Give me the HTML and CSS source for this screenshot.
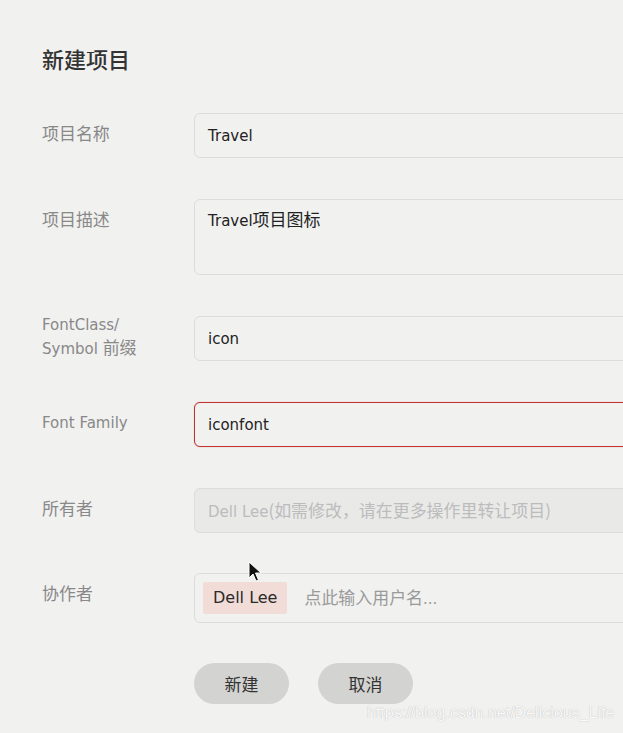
FILE: index.html
```html
<!DOCTYPE html>
<html lang="zh">
<head>
<meta charset="utf-8">
<title>新建项目</title>
<link rel="stylesheet" href="styles.css">
</head>
<body>
<div class="page">
  <h1 class="title">新建项目</h1>
  <div class="form">
    <div class="row">
      <div class="label"><span><span class="zh">项目名称</span></span></div>
      <div class="field"><span class="text">Travel</span></div>
    </div>
    <div class="row">
      <div class="label"><span><span class="zh">项目描述</span></span></div>
      <div class="field area"><span class="text">Travel<span class="zh">项目图标</span></span></div>
    </div>
    <div class="row">
      <div class="label"><span>FontClass/<br>Symbol <span class="zh">前缀</span></span></div>
      <div class="field"><span class="text">icon</span></div>
    </div>
    <div class="row">
      <div class="label"><span>Font Family</span></div>
      <div class="field focus"><span class="text">iconfont</span></div>
    </div>
    <div class="row">
      <div class="label"><span><span class="zh">所有者</span></span></div>
      <div class="field disabled"><span class="text">Dell Lee<span class="zh">(如需修改，请在更多操作里转让项目)</span></span></div>
    </div>
    <div class="row row-collab">
      <div class="label"><span><span class="zh">协作者</span></span></div>
      <div class="field tags">
        <span class="tag">Dell Lee</span>
        <span class="placeholder"><span class="zh">点此输入用户名</span>...</span>
      </div>
    </div>
    <div class="actions">
      <button class="btn"><span class="zh">新建</span></button>
      <button class="btn"><span class="zh">取消</span></button>
    </div>
  </div>
  <div class="watermark">https://blog.csdn.net/Delicious_Life</div>
  <svg class="cursor" width="14" height="22" viewBox="0 0 14 22">
    <path d="M1 1 L1 17 L5 13 L8 20 L10.5 19 L7.5 12 L13 12 Z" fill="#111" stroke="#fff" stroke-width="1"/>
  </svg>
</div>
</body>
</html>
```
FILE: styles.css
```css
html, body {
  margin: 0;
  padding: 0;
  background: #f1f1f0;
  overflow: hidden;
}
.page {
  position: relative;
  width: 623px;
  height: 733px;
  padding: 42px 0 0 42px;
  box-sizing: border-box;
  overflow: hidden;
  font-family: "DejaVu Sans", "Noto Sans CJK SC", sans-serif;
  font-size: 15px;
  color: #222;
}
.zh {
  font-family: "Noto Sans CJK SC", sans-serif;
  font-size: 1.13em;
}
.title {
  margin: 0 0 39px 0;
  font-family: "Noto Sans CJK SC", sans-serif;
  font-size: 22px;
  font-weight: 500;
  line-height: 32px;
  color: #333;
}
.form {
  display: flex;
  flex-direction: column;
  gap: 41px;
}
.row {
  display: flex;
  align-items: flex-start;
}
.row-collab {
  margin-top: -1px;
}
.label {
  width: 152px;
  flex: none;
  height: 41px;
  display: flex;
  align-items: center;
  line-height: 22px;
  color: #888;
}
.field {
  width: 470px;
  flex: none;
  height: 45px;
  box-sizing: border-box;
  border: 1px solid #dcdcdc;
  border-radius: 6px;
  background: #f1f1f0;
  padding: 0 13px;
  display: flex;
  align-items: center;
  line-height: 22px;
}
.field.area {
  height: 76px;
  align-items: flex-start;
  padding-top: 8px;
}
.field.focus {
  border-color: #c0332e;
  box-shadow: 0 0 1px rgba(192, 51, 46, 0.5);
}
.field.disabled {
  background: #e9e9e8;
  color: #bcbcbc;
}
.field.tags {
  height: 50px;
  padding: 0 8px;
  gap: 17px;
}
.tag {
  display: flex;
  align-items: center;
  height: 32px;
  padding: 0 10px;
  background: #f1dcd8;
  border-radius: 2px;
  color: #2a2a2a;
  font-size: 16px;
}
.placeholder {
  color: #9a9a9a;
}
.actions {
  display: flex;
  gap: 29px;
  margin-left: 152px;
  margin-top: -1px;
}
.btn {
  width: 95px;
  height: 41px;
  border: none;
  border-radius: 21px;
  background: #d3d3d2;
  color: #333;
  font-family: "Noto Sans CJK SC", sans-serif;
  font-size: 15px;
  padding: 0;
}
.watermark {
  position: absolute;
  left: 367px;
  top: 704px;
  font-family: "Liberation Sans", Arial, sans-serif;
  font-size: 16px;
  white-space: nowrap;
  color: rgba(255, 255, 255, 0.95);
  text-shadow: 0 0 1px rgba(0, 0, 0, 0.3);
}
.cursor {
  position: absolute;
  left: 248px;
  top: 561px;
}
```
